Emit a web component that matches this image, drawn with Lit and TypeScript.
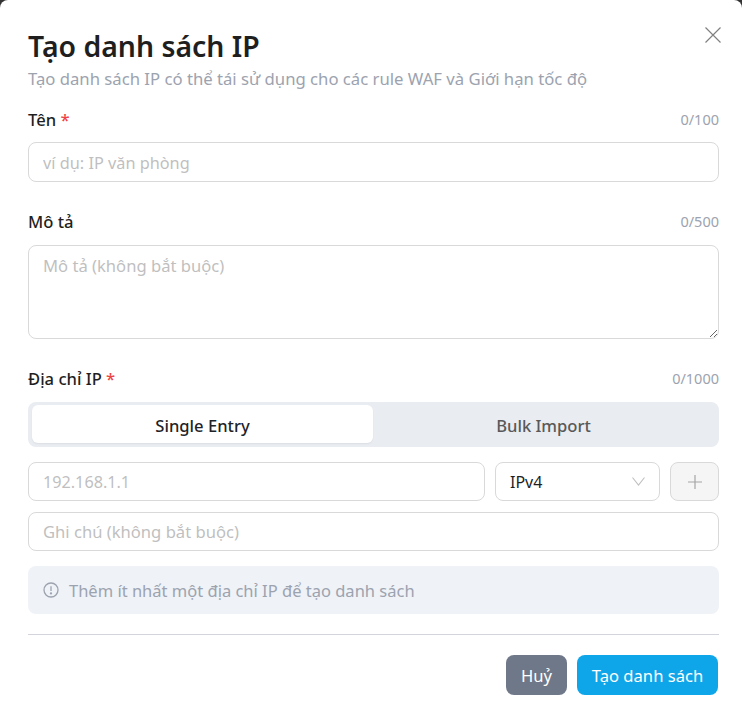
import { LitElement, html, css } from "lit";
import { customElement } from "lit/decorators.js";

@customElement("app-root")
export class AppRoot extends LitElement {
  static styles = css`
    :host {
      display: block;
      width: 742px;
      height: 716px;
      background: #333;
      font-family: "Noto Sans", "Open Sans", sans-serif;
      color: #1f2328;
    }
    * { box-sizing: border-box; }
    .modal {
      position: relative;
      height: 716px;
      background: #fff;
      border-radius: 8px 8px 0 0;
      padding: 24px 23px 0 28px;
      display: flex;
      flex-direction: column;
    }
    .close {
      position: absolute;
      top: 27px;
      right: 21px;
      width: 16px;
      height: 16px;
      display: block;
    }
    h1 {
      margin: 0;
      font-size: 28.4px;
      line-height: 44px;
      font-weight: 600;
      color: #1f1f1f;
    }
    .sub {
      margin: 0;
      font-size: 16.7px;
      line-height: 22px;
      color: #9ca3af;
    }
    .head {
      display: flex;
      justify-content: space-between;
      align-items: center;
      height: 22px;
    }
    .head.first { margin-top: 18px; }
    .label { font-size: 16.6px; font-weight: 500; color: #1f1f1f; }
    .req { color: #ef4444; }
    .count { font-size: 14.5px; color: #9ca3af; }
    .field {
      display: block;
      width: 100%;
      height: 40px;
      border: 1px solid #d9d9d9;
      border-radius: 8px;
      padding: 0 14px;
      font: inherit;
      font-size: 16.6px;
      background: #fff;
      outline: none;
    }
    .field::placeholder { color: #bfbfbf; opacity: 1; }
    .name { font-size: 16.3px; padding-top: 1px; margin-top: 12px; }
    .ip { font-size: 16.2px; }
    .mt { margin-top: 11px; height: 39px; }
    textarea.field {
      height: 94px;
      margin-top: 13px;
      padding: 8px 14px;
      line-height: 24px;
      resize: vertical;
    }
    .gap1 { margin-top: 28px; }
    .gap2 { margin-top: 28px; }
    .tabs {
      margin-top: 13px;
      height: 45px;
      background: #e9ecf1;
      border-radius: 8px;
      padding: 3px 5px 4px 4px;
      display: grid;
      grid-template-columns: 1fr 1fr;
    }
    .tab {
      display: flex;
      align-items: center;
      justify-content: center;
      font-size: 16.6px;
      font-weight: 500;
      color: #595959;
      border-radius: 6px;
      padding-top: 2px;
    }
    .tab.on {
      background: #fff;
      color: #1f2328;
      box-shadow: 0 1px 2px rgba(0, 0, 0, 0.06);
    }
    .row {
      margin-top: 15px;
      display: flex;
      gap: 10px;
      height: 39px;
    }
    .row .field { height: 39px; flex: 1; min-width: 0; }
    .select {
      width: 165px;
      height: 39px;
      border: 1px solid #d9d9d9;
      border-radius: 8px;
      padding: 1px 14px 0;
      font-size: 16px;
      color: #1f1f1f;
      display: flex;
      align-items: center;
      justify-content: space-between;
    }
    .select svg { width: 13px; height: 9px; display: block; margin-top: -2px; }
    .add {
      width: 49px;
      height: 39px;
      border: 1px solid #d9d9d9;
      border-radius: 8px;
      background: #f5f5f5;
      display: flex;
      align-items: center;
      justify-content: center;
    }
    .add svg { width: 16px; height: 16px; display: block; }
    .alert {
      margin-top: 15px;
      height: 48px;
      background: #eff2f7;
      border-radius: 8px;
      padding: 0 15px;
      display: flex;
      align-items: center;
      gap: 10px;
      font-size: 16.5px;
      color: #9ca3af;
    }
    .alert svg { width: 16px; height: 16px; display: block; }
    hr {
      margin: 20px 0 0;
      border: 0;
      border-top: 1px solid #d4d4dc;
    }
    .foot {
      margin-top: 20px;
      margin-right: 1px;
      display: flex;
      justify-content: flex-end;
      gap: 10px;
    }
    .btn {
      height: 40px;
      border-radius: 8px;
      display: flex;
      align-items: center;
      justify-content: center;
      color: #fff;
      font-size: 16.6px;
      font-weight: 400;
    }
    .cancel { width: 61px; background: #6f7889; }
    .ok { width: 141px; background: #0ea5e9; }
  `;

  render() {
    return html`
      <div class="modal">
        <svg class="close" viewBox="0 0 16 16" fill="none" stroke="#808080" stroke-width="1.2">
          <path d="M0.5 0.5 L15.5 15.5 M15.5 0.5 L0.5 15.5" />
        </svg>
        <h1>Tạo danh sách IP</h1>
        <p class="sub">Tạo danh sách IP có thể tái sử dụng cho các rule WAF và Giới hạn tốc độ</p>

        <div class="head first">
          <span class="label">Tên <span class="req">*</span></span>
          <span class="count">0/100</span>
        </div>
        <input class="field name" placeholder="ví dụ: IP văn phòng" />

        <div class="head gap1">
          <span class="label">Mô tả</span>
          <span class="count">0/500</span>
        </div>
        <textarea class="field" placeholder="Mô tả (không bắt buộc)"></textarea>

        <div class="head gap2">
          <span class="label">Địa chỉ IP <span class="req">*</span></span>
          <span class="count">0/1000</span>
        </div>
        <div class="tabs">
          <div class="tab on">Single Entry</div>
          <div class="tab">Bulk Import</div>
        </div>

        <div class="row">
          <input class="field ip" placeholder="192.168.1.1" />
          <div class="select">
            <span>IPv4</span>
            <svg viewBox="0 0 13 9" fill="none" stroke="#bfbfbf" stroke-width="1.1"><path d="M0.5 0.5 L6.5 8 L12.5 0.5" /></svg>
          </div>
          <div class="add">
            <svg viewBox="0 0 16 16" fill="none" stroke="#a6a6a6" stroke-width="1.2"><path d="M8 1 V15 M1 8 H15" /></svg>
          </div>
        </div>
        <input class="field mt" placeholder="Ghi chú (không bắt buộc)" />

        <div class="alert">
          <svg viewBox="0 0 16 16" fill="none" stroke="#9ca3af" stroke-width="1.3">
            <circle cx="8" cy="8" r="7" />
            <path d="M8 4.2 V9" />
            <circle cx="8" cy="11.4" r="0.5" fill="#9ca3af" />
          </svg>
          <span>Thêm ít nhất một địa chỉ IP để tạo danh sách</span>
        </div>

        <hr />
        <div class="foot">
          <div class="btn cancel">Huỷ</div>
          <div class="btn ok">Tạo danh sách</div>
        </div>
      </div>
    `;
  }
}
